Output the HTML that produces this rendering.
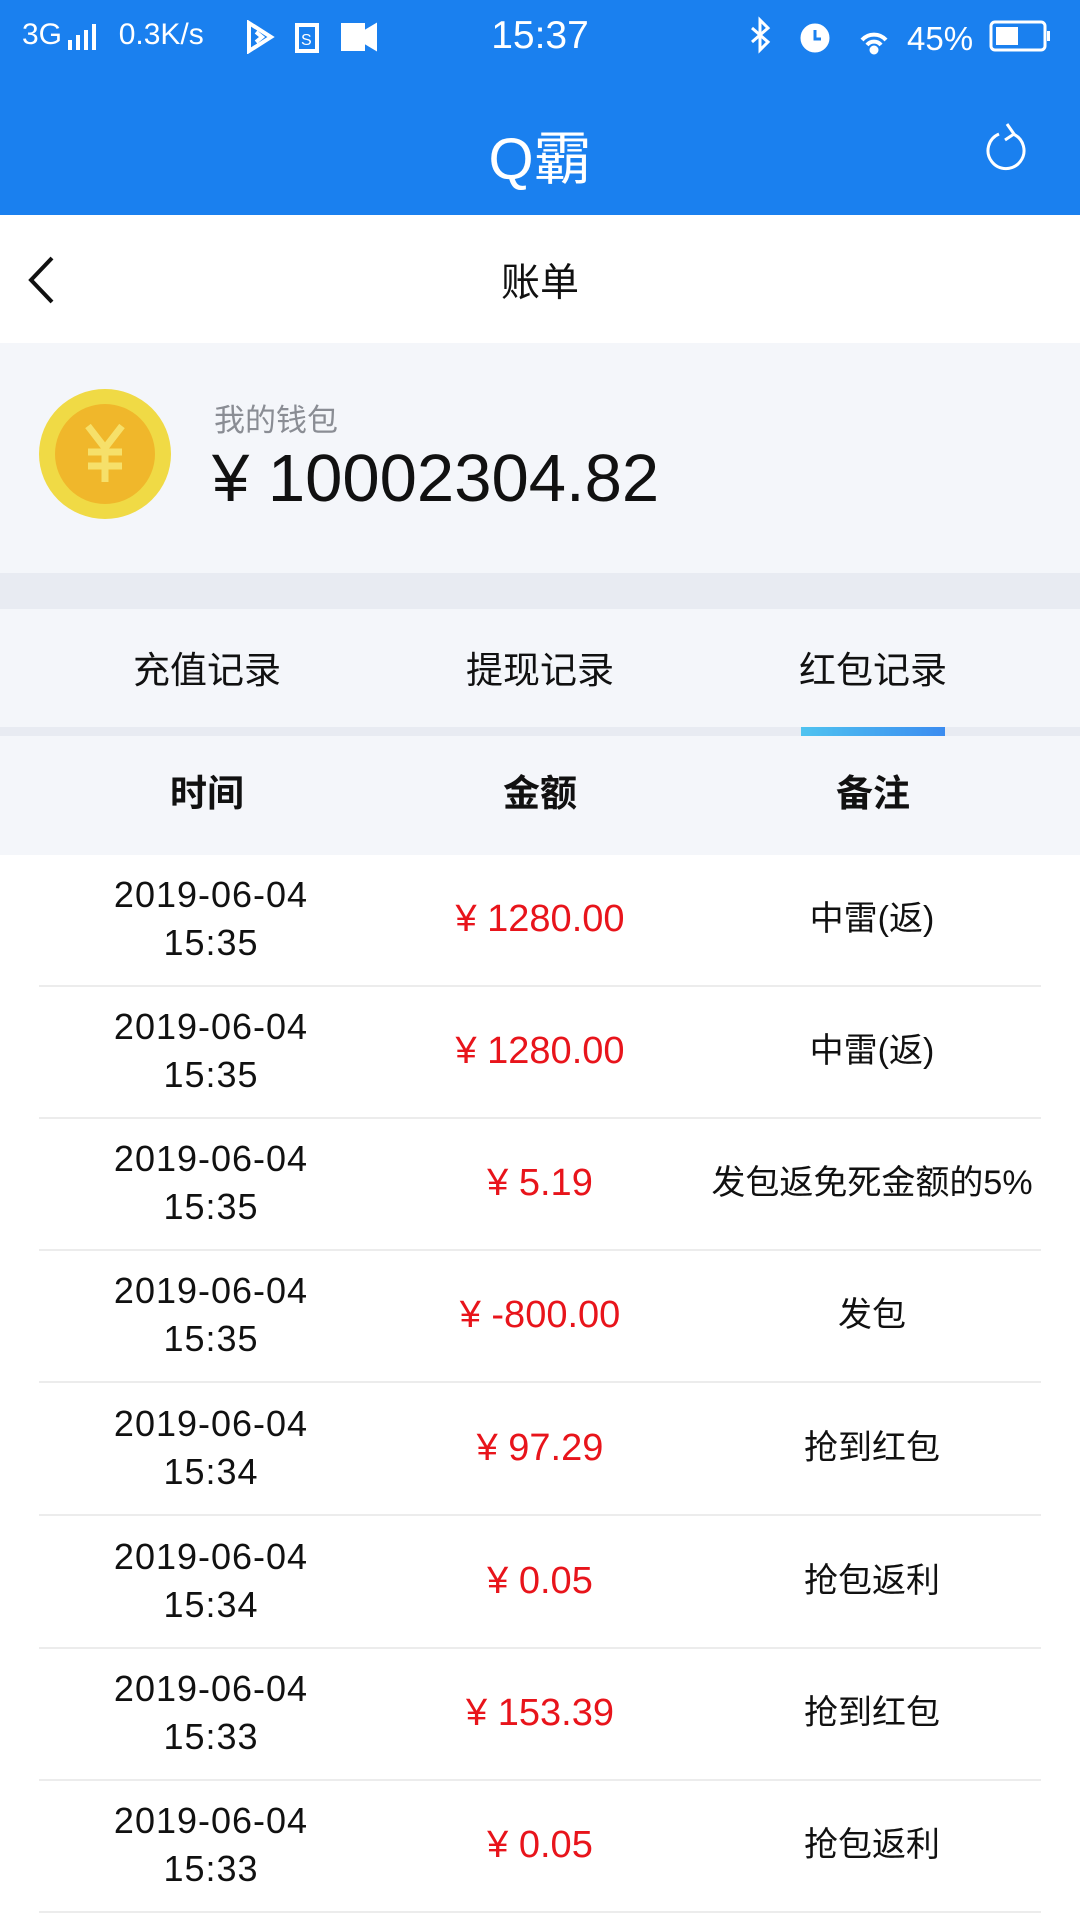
<!DOCTYPE html>
<html><head><meta charset="utf-8"><style>
*{margin:0;padding:0;box-sizing:border-box}
body{width:1080px;height:1920px;background:#fff;font-family:"Liberation Sans","Noto Sans CJK SC",sans-serif;position:relative;overflow:hidden;color:#111}
.a{position:absolute;white-space:nowrap}
.c{transform:translateX(-50%)}
.row{position:absolute;left:0;width:1080px;height:132px}
.row div{white-space:nowrap}
.row .d{position:absolute;left:211px;transform:translateX(-50%);font-size:36px;letter-spacing:1px;text-align:center;line-height:48px;top:16px}
.row .m{position:absolute;left:540px;transform:translateX(-50%);font-size:38px;color:#e8141b;top:44px;line-height:40px}
.row .n{position:absolute;left:872px;transform:translateX(-50%);font-size:34px;top:44px;line-height:40px}
.row .l{position:absolute;left:39px;width:1002px;bottom:0;height:2px;background:#ececec}
</style></head><body>
<div class="a" style="left:0;top:0;width:1080px;height:215px;background:#1a80ef"></div>
<div class="a" style="left:22px;top:18px;color:#fff;font-size:30px">3G <span style="display:inline-block;width:40px"></span> 0.3K/s</div>
<svg class="a" style="left:66px;top:22px" width="40" height="30" viewBox="0 0 40 30" fill="#fff"><rect x="2" y="18" width="4" height="10"/><rect x="10" y="13" width="4" height="15"/><rect x="18" y="8" width="4" height="20"/><rect x="26" y="2" width="4" height="26"/></svg>
<svg class="a" style="left:245px;top:20px" width="140" height="34" viewBox="0 0 140 34" fill="none" stroke="#fff" stroke-width="4"><path d="M4 3 L26 17 L4 31 Z M11 12 L17 17 L11 22"/><rect x="52" y="5" width="20" height="26"/><text x="56" y="25" fill="#fff" stroke="none" font-size="16" font-family="Liberation Sans">S</text><path d="M98 5h20v24h-20z" fill="#fff"/><path d="M120 12l10-6v22l-10-6z" fill="#fff"/></svg>
<div class="a c" style="left:540px;top:14px;color:#fff;font-size:39px">15:37</div>
<svg class="a" style="left:750px;top:16px" width="310" height="40" viewBox="0 0 310 40" fill="none" stroke="#fff" stroke-width="3"><path d="M2 12l16 14-8 8V4l8 8-16 14"/><circle cx="65" cy="22" r="13" fill="#fff"/><path d="M65 14v9h6" stroke="#1a80ef"/><path d="M112 24a16 16 0 0 1 24 0M117 29a9 9 0 0 1 14 0" stroke-width="4"/><circle cx="124" cy="34" r="3" fill="#fff"/><text x="157" y="34" fill="#fff" stroke="none" font-size="33" font-family="Liberation Sans">45%</text><rect x="241" y="6" width="54" height="28" rx="4"/><rect x="246" y="11" width="22" height="18" fill="#fff" stroke="none"/><rect x="297" y="15" width="3" height="10" fill="#fff" stroke="none"/></svg>
<div class="a c" style="left:540px;top:112px;color:#fff;font-size:58px">Q霸</div>
<svg class="a" style="left:985px;top:118px" width="46" height="56" viewBox="0 0 46 56" fill="none" stroke="#fff" stroke-width="3"><path d="M28 16a18 18 0 1 1 -14 0"/><path d="M22 6l7 10-9 6"/></svg>
<svg class="a" style="left:26px;top:255px" width="30" height="50" viewBox="0 0 30 50" fill="none" stroke="#111" stroke-width="4"><path d="M26 3L5 25l21 22"/></svg>
<div class="a c" style="left:540px;top:252px;font-size:39px">账单</div>
<div class="a" style="left:0;top:343px;width:1080px;height:230px;background:#f4f6fa"></div>
<svg class="a" style="left:38px;top:388px" width="134" height="132" viewBox="0 0 134 132"><ellipse cx="67" cy="66" rx="66" ry="65" fill="#f0da45"/><circle cx="67" cy="66" r="50" fill="#f0b72b"/><path d="M50 38l17 22 17-22M67 60v34M50 64h34M50 78h34" stroke="#f6e06a" stroke-width="7" fill="none"/></svg>
<div class="a" style="left:214px;top:395px;font-size:31px;color:#8a8d94">我的钱包</div>
<div class="a" style="left:212px;top:440px;font-size:67px;color:#111">¥ 10002304.82</div>
<div class="a" style="left:0;top:573px;width:1080px;height:36px;background:#e8ebf2"></div>
<div class="a" style="left:0;top:609px;width:1080px;height:118px;background:#f4f6fa"></div>
<div class="a c" style="left:207px;top:640px;font-size:37px">充值记录</div>
<div class="a c" style="left:540px;top:640px;font-size:37px">提现记录</div>
<div class="a c" style="left:873px;top:640px;font-size:37px">红包记录</div>
<div class="a" style="left:0;top:727px;width:1080px;height:9px;background:#e8ebf2"></div>
<div class="a" style="left:801px;top:727px;width:144px;height:9px;background:linear-gradient(90deg,#4fc3f0,#3b8cf0)"></div>
<div class="a" style="left:0;top:736px;width:1080px;height:119px;background:#f4f6fa"></div>
<div class="a c" style="left:207px;top:763px;font-size:37px;font-weight:bold">时间</div>
<div class="a c" style="left:540px;top:763px;font-size:37px;font-weight:bold">金额</div>
<div class="a c" style="left:873px;top:763px;font-size:37px;font-weight:bold">备注</div>

<div class="row" style="top:855px"><div class="d">2019-06-04<br>15:35</div><div class="m">¥ 1280.00</div><div class="n">中雷(返)</div><div class="l"></div></div>
<div class="row" style="top:987px"><div class="d">2019-06-04<br>15:35</div><div class="m">¥ 1280.00</div><div class="n">中雷(返)</div><div class="l"></div></div>
<div class="row" style="top:1119px"><div class="d">2019-06-04<br>15:35</div><div class="m">¥ 5.19</div><div class="n">发包返免死金额的5%</div><div class="l"></div></div>
<div class="row" style="top:1251px"><div class="d">2019-06-04<br>15:35</div><div class="m">¥ -800.00</div><div class="n">发包</div><div class="l"></div></div>
<div class="row" style="top:1384px"><div class="d">2019-06-04<br>15:34</div><div class="m">¥ 97.29</div><div class="n">抢到红包</div><div class="l"></div></div>
<div class="row" style="top:1517px"><div class="d">2019-06-04<br>15:34</div><div class="m">¥ 0.05</div><div class="n">抢包返利</div><div class="l"></div></div>
<div class="row" style="top:1649px"><div class="d">2019-06-04<br>15:33</div><div class="m">¥ 153.39</div><div class="n">抢到红包</div><div class="l"></div></div>
<div class="row" style="top:1781px"><div class="d">2019-06-04<br>15:33</div><div class="m">¥ 0.05</div><div class="n">抢包返利</div><div class="l"></div></div>
</body></html>
